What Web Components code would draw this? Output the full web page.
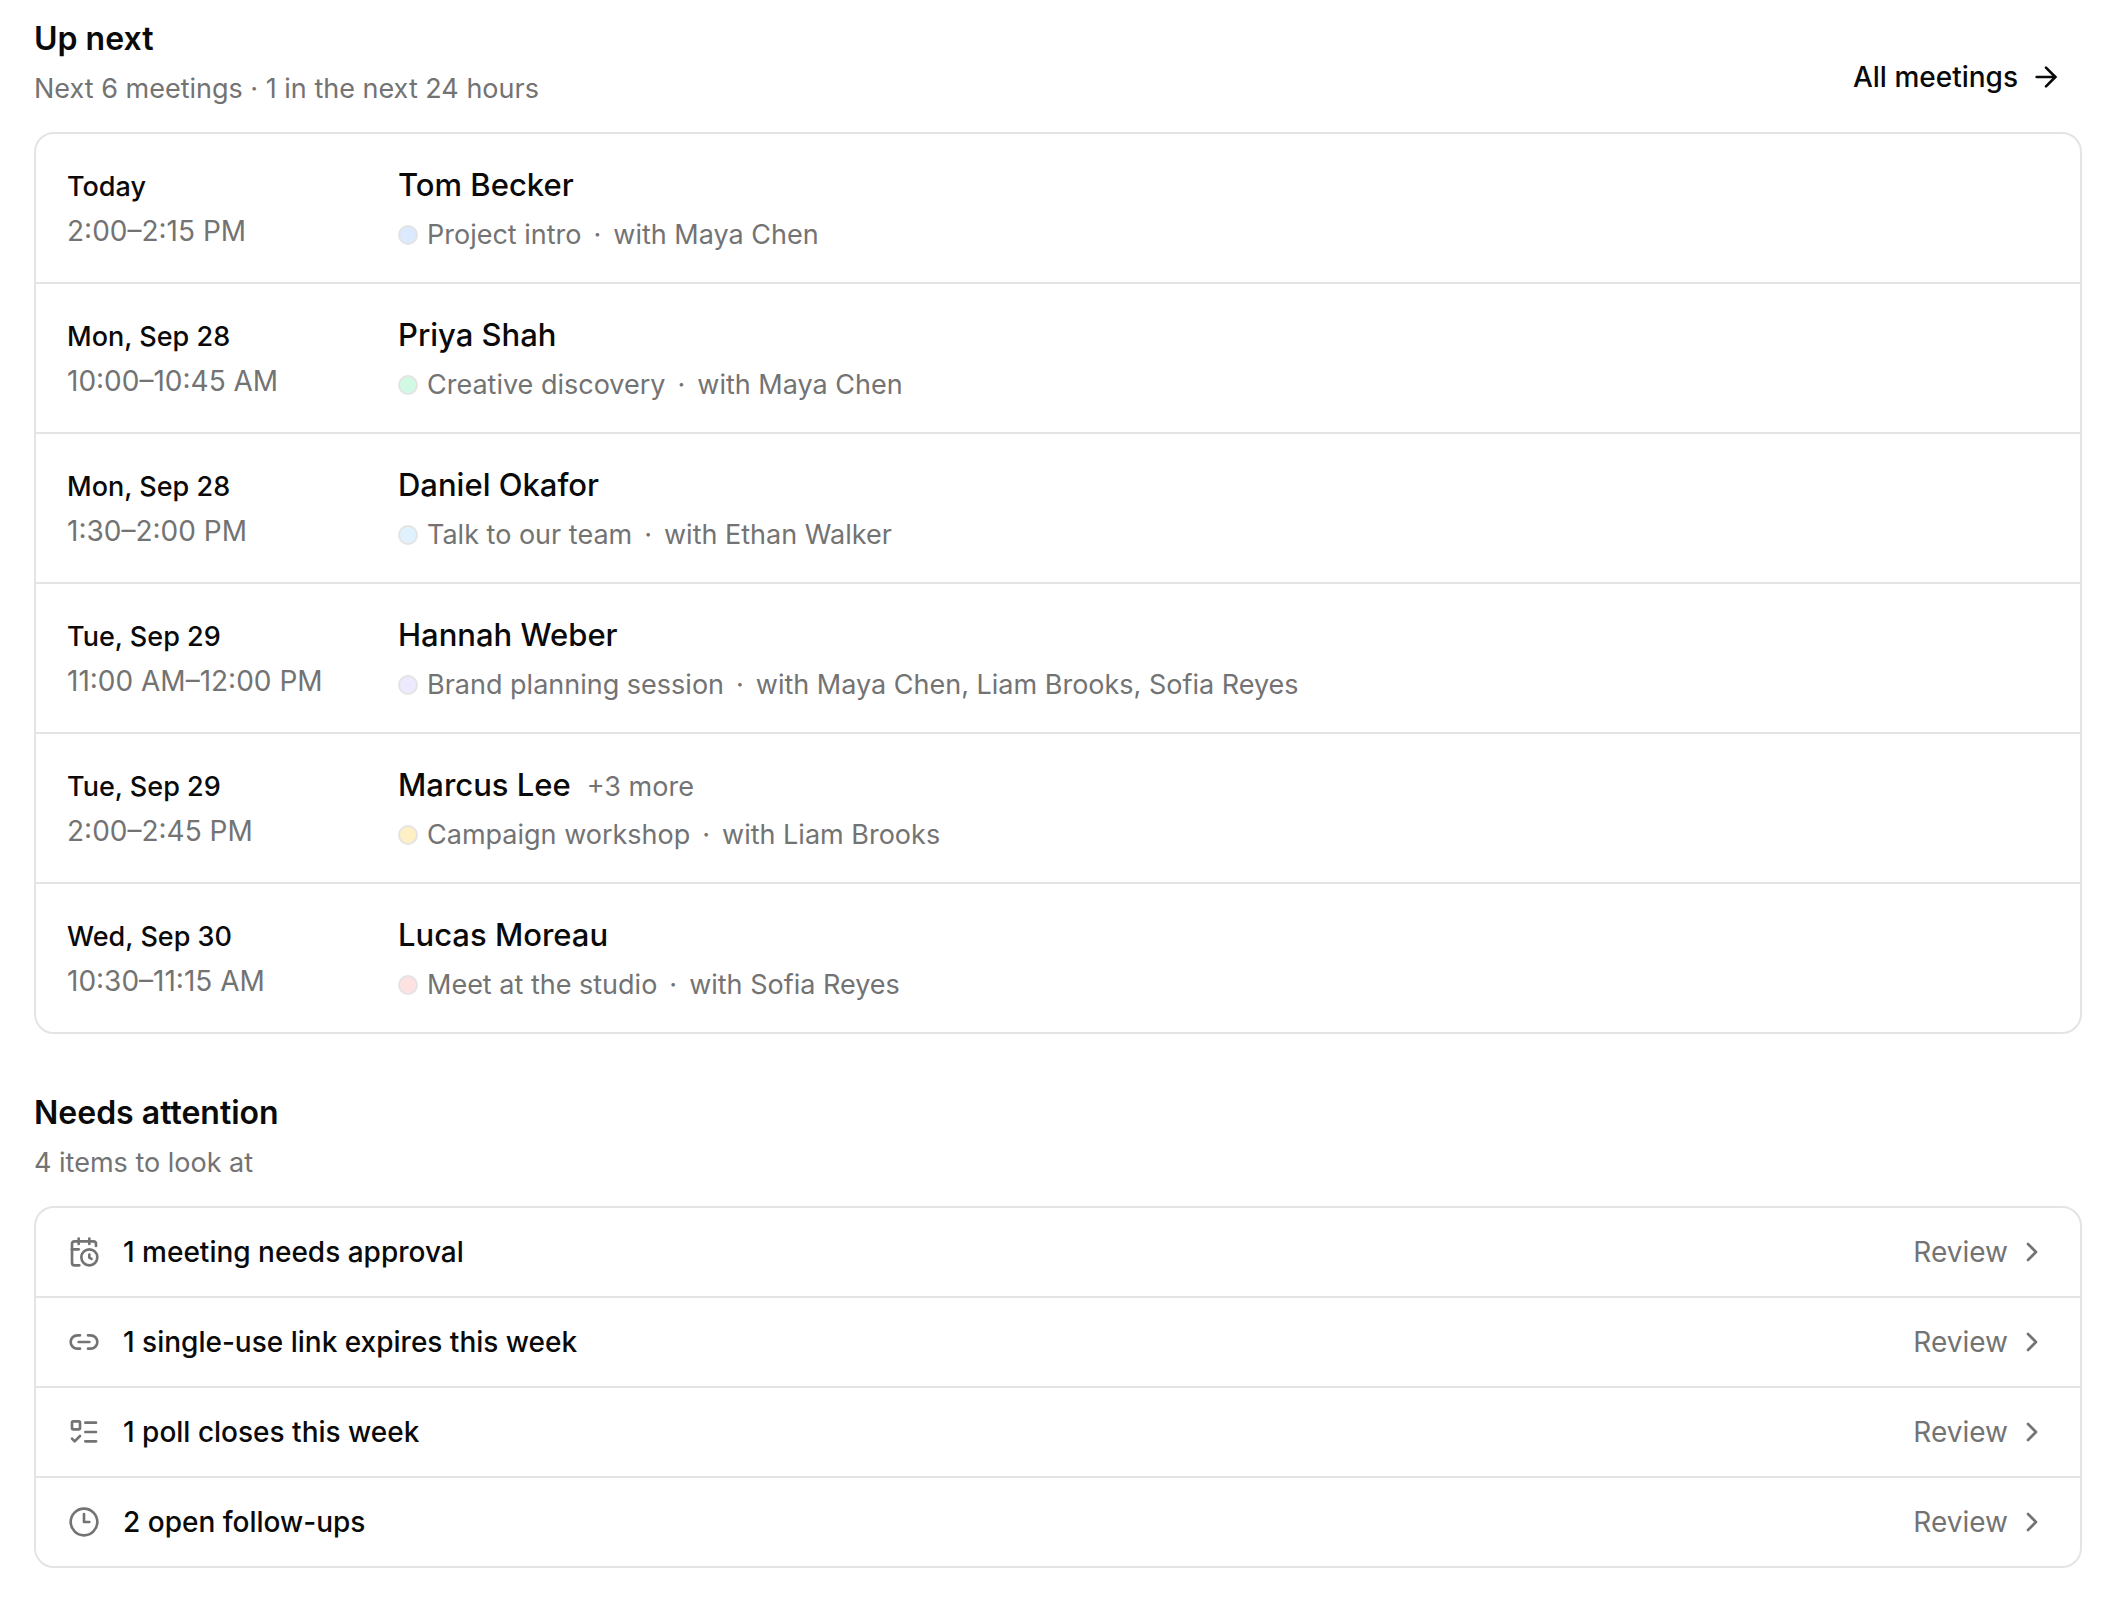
<!DOCTYPE html>
<html lang="en">
<head>
<meta charset="utf-8">
<meta name="viewport" content="width=device-width, initial-scale=1">
<title>Up next</title>
<style>
body {
  --ink: #0a0a0a;
  --muted: #737373;
  --line: #e4e4e4;
  margin: 0;
  padding: 17px 30px 32px 34px;
  background: #fff;
  color: var(--ink);
  font-family: Inter, "Liberation Sans", sans-serif;
  font-size: 27px;
  line-height: 40px;
}
</style>
</head>
<body>
<main>
  <list-section heading="Up next" summary="Next 6 meetings · 1 in the next 24 hours">
    <arrow-link slot="action" href="#meetings">All meetings</arrow-link>
    <meeting-row day="Today" time="2:00–2:15 PM" name="Tom Becker" kind="Project intro" host="Maya Chen" color="#dbeafe"></meeting-row>
    <meeting-row day="Mon, Sep 28" time="10:00–10:45 AM" name="Priya Shah" kind="Creative discovery" host="Maya Chen" color="#d1fae5"></meeting-row>
    <meeting-row day="Mon, Sep 28" time="1:30–2:00 PM" name="Daniel Okafor" kind="Talk to our team" host="Ethan Walker" color="#e0f2fe"></meeting-row>
    <meeting-row day="Tue, Sep 29" time="11:00 AM–12:00 PM" name="Hannah Weber" kind="Brand planning session" host="Maya Chen, Liam Brooks, Sofia Reyes" color="#ede9fe"></meeting-row>
    <meeting-row day="Tue, Sep 29" time="2:00–2:45 PM" name="Marcus Lee" more="+3 more" kind="Campaign workshop" host="Liam Brooks" color="#fef0c3"></meeting-row>
    <meeting-row day="Wed, Sep 30" time="10:30–11:15 AM" name="Lucas Moreau" kind="Meet at the studio" host="Sofia Reyes" color="#fee2e2"></meeting-row>
  </list-section>

  <list-section heading="Needs attention" summary="4 items to look at">
    <attention-row icon="calendar" href="#approvals">1 meeting needs approval</attention-row>
    <attention-row icon="link" href="#links">1 single-use link expires this week</attention-row>
    <attention-row icon="poll" href="#polls">1 poll closes this week</attention-row>
    <attention-row icon="clock" href="#follow-ups">2 open follow-ups</attention-row>
  </list-section>
</main>

<script>
const icons = {
  calendar: '<path d="M16 14v2.2l1.6 1"/><path d="M16 2v4"/><path d="M21 7.5V6a2 2 0 0 0-2-2H5a2 2 0 0 0-2 2v14a2 2 0 0 0 2 2h3.5"/><path d="M3 10h5"/><path d="M8 2v4"/><circle cx="16" cy="16" r="6"/>',
  link: '<path d="M9 17H7A5 5 0 0 1 7 7h2"/><path d="M15 7h2a5 5 0 1 1 0 10h-2"/><path d="M8 12h8"/>',
  poll: '<path d="M13 5h8"/><path d="M13 12h8"/><path d="M13 19h8"/><path d="m3 17 2 2 4-4"/><rect x="3" y="4" width="6" height="6" rx="1"/>',
  clock: '<circle cx="12" cy="12" r="10"/><path d="M12 6v6h4"/>',
  arrow: '<path d="M5 12h14"/><path d="m12 5 7 7-7 7"/>',
  chevron: '<path d="m9 18 6-6-6-6"/>',
};

class LineIcon extends HTMLElement {
  constructor() {
    super();
    this.attachShadow({ mode: "open" });
  }

  connectedCallback() {
    this.shadowRoot.innerHTML = `
<style>
:host { display: block; flex: none; width: 32px; height: 32px; }
svg { display: block; width: 100%; height: 100%; }
</style>
<svg viewBox="0 0 24 24" fill="none" stroke="currentColor" stroke-width="2" stroke-linecap="round" stroke-linejoin="round" aria-hidden="true">${icons[this.getAttribute("name")]}</svg>`;
  }
}

class ArrowLink extends HTMLElement {
  constructor() {
    super();
    this.attachShadow({ mode: "open" });
  }

  connectedCallback() {
    this.shadowRoot.innerHTML = `
<style>
:host { display: block; }
a {
  display: flex;
  align-items: center;
  gap: 12px;
  padding: 12px 20px;
  color: inherit;
  font-size: 28px;
  font-weight: 500;
  text-decoration: none;
}
a:hover { text-decoration: underline; }
</style>
<a href="${this.getAttribute("href")}"><slot></slot><line-icon name="arrow"></line-icon></a>`;
  }
}

class ListSection extends HTMLElement {
  constructor() {
    super();
    this.attachShadow({ mode: "open" });
  }

  connectedCallback() {
    this.shadowRoot.innerHTML = `
<style>
:host { display: block; }
:host(:not(:first-child)) { margin-top: 57px; }
header {
  display: flex;
  align-items: flex-end;
  justify-content: space-between;
  margin-bottom: 23px;
}
h2 { margin: 0; font-size: 32px; font-weight: 600; line-height: 44px; }
p { margin: 8px 0 0; color: var(--muted); }
.card {
  border: 2px solid var(--line);
  border-radius: 20px;
  overflow: hidden;
}
::slotted(:not([slot]):not(:last-child)) { border-bottom: 2px solid var(--line); }
</style>
<section>
  <header>
    <div>
      <h2></h2>
      <p></p>
    </div>
    <slot name="action"></slot>
  </header>
  <div class="card" role="list"><slot></slot></div>
</section>`;
    this.shadowRoot.querySelector("h2").textContent = this.getAttribute("heading");
    this.shadowRoot.querySelector("p").textContent = this.getAttribute("summary");
  }
}

const meetingTemplate = document.createElement("template");
meetingTemplate.innerHTML = `
<style>
:host {
  display: grid;
  grid-template-columns: 299px 1fr;
  column-gap: 32px;
  align-items: center;
  padding: 29px 32px 27px 31px;
}
.when, .who { display: grid; }
.when { row-gap: 4px; }
.who { row-gap: 8px; }
.day { font-weight: 500; }
.time { font-size: 28px; }
.time, .more, .details { color: var(--muted); }
.title { display: flex; align-items: baseline; gap: 16px; line-height: 44px; }
.name { font-size: 31px; font-weight: 500; }
.more { line-height: 32px; }
.details { display: flex; align-items: center; }
.dot {
  box-sizing: border-box;
  flex: none;
  width: 20px;
  height: 20px;
  margin-right: 9px;
  border: 2px solid var(--line);
  border-radius: 50%;
}
.separator { margin: 0 12px; }
</style>
<div class="when">
  <span class="day"></span>
  <span class="time"></span>
</div>
<div class="who">
  <div class="title"><span class="name"></span><span class="more"></span></div>
  <div class="details">
    <span class="dot"></span>
    <span class="kind"></span>
    <span class="separator">·</span>
    <span class="host"></span>
  </div>
</div>
`;

class MeetingRow extends HTMLElement {
  constructor() {
    super();
    this.attachShadow({ mode: "open" });
    this.shadowRoot.appendChild(meetingTemplate.content.cloneNode(true));
  }

  connectedCallback() {
    this.setAttribute("role", "listitem");
    for (const key of ["day", "time", "name", "kind"]) {
      this.shadowRoot.querySelector("." + key).textContent = this.getAttribute(key);
    }
    this.shadowRoot.querySelector(".host").textContent = "with " + this.getAttribute("host");
    this.shadowRoot.querySelector(".dot").style.backgroundColor = this.getAttribute("color");

    const more = this.shadowRoot.querySelector(".more");
    if (this.hasAttribute("more")) more.textContent = this.getAttribute("more");
    else more.remove();
  }
}

class AttentionRow extends HTMLElement {
  constructor() {
    super();
    this.attachShadow({ mode: "open" });
  }

  connectedCallback() {
    this.setAttribute("role", "listitem");
    this.shadowRoot.innerHTML = `
<style>
:host { display: block; font-size: 28px; }
a {
  display: flex;
  align-items: center;
  gap: 23px;
  padding: 24px 32px;
  color: inherit;
  text-decoration: none;
}
a:hover { background: #fafafa; }
line-icon, .review { color: var(--muted); }
.label { flex: 1; font-weight: 500; }
.review { display: flex; align-items: center; gap: 8px; }
</style>
<a href="${this.getAttribute("href")}">
  <line-icon name="${this.getAttribute("icon")}"></line-icon>
  <span class="label"><slot></slot></span>
  <span class="review">Review<line-icon name="chevron"></line-icon></span>
</a>`;
  }
}

customElements.define("line-icon", LineIcon);
customElements.define("arrow-link", ArrowLink);
customElements.define("list-section", ListSection);
customElements.define("meeting-row", MeetingRow);
customElements.define("attention-row", AttentionRow);
</script>
</body>
</html>
